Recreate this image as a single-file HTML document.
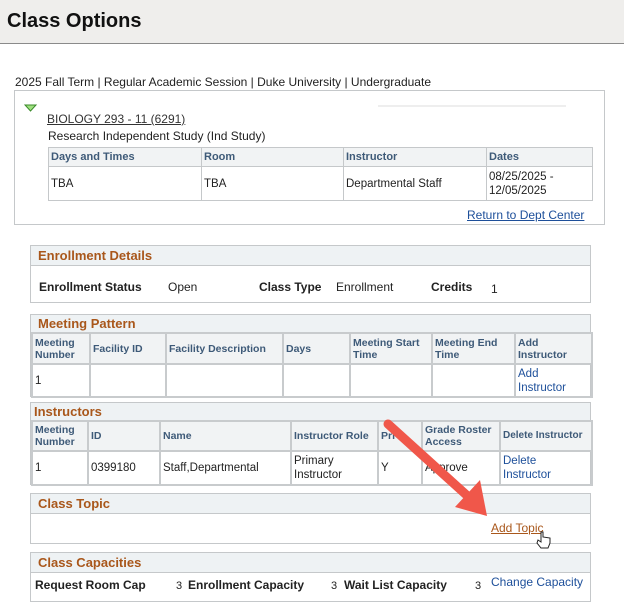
<!DOCTYPE html>
<html><head><style>
*{margin:0;padding:0;box-sizing:border-box}
body{width:624px;height:592px;overflow:hidden;background:#fff;font-family:"Liberation Sans",Arial,sans-serif;font-size:12px;color:#222;position:relative}
.a{position:absolute}
.hdr{left:0;top:0;width:624px;height:44px;background:#efeeec;border-bottom:1px solid #8a8a8a}
.hdr div{position:absolute;left:7px;top:10px;font-size:20px;font-weight:bold;color:#111}
.lnk{color:#1d4f9a;text-decoration:underline}
table{border-collapse:collapse;position:absolute;table-layout:fixed}
td,th{border:1px solid #c5c8ca;text-align:left;vertical-align:middle;padding:0 2px;font-size:11.5px;overflow:hidden}
th{color:#3e5a78;font-weight:bold;font-size:10.5px;line-height:12px;background:#f1f3f4}
.grp{position:absolute;border:1px solid #c5c8ca;left:30px;width:561px}
.gh{height:20px;background:#eef2f4;border-bottom:1px solid #c5c8ca;color:#a9571b;font-weight:bold;font-size:13px;padding:2px 7px}
.tb th,.tb td{border:2px solid #c8cbcd}
</style></head><body>
<div class="a hdr"><div>Class Options</div></div>
<div class="a" style="left:15px;top:75px">2025 Fall Term | Regular Academic Session | Duke University | Undergraduate</div>
<div class="a" style="left:14px;top:90px;width:591px;height:135px;border:1px solid #c5c8ca"></div>
<svg class="a" style="left:24px;top:104px" width="14" height="9"><polygon points="1,1 12,1 6.5,7" fill="#9fe07f" stroke="#3a8a2a" stroke-width="1"/></svg>
<div class="a" style="left:378px;top:105px;width:188px;height:2px;background:#eee"></div>
<div class="a lnk" style="left:47px;top:112px;color:#333">BIOLOGY 293 - 11 (6291)</div>
<div class="a" style="left:48px;top:129px">Research Independent Study (Ind Study)</div>
<table style="left:48px;top:147px;width:544px">
<colgroup><col style="width:153px"><col style="width:142px"><col style="width:143px"><col style="width:106px"></colgroup>
<tr style="height:19px"><th style="font-size:11px">Days and Times</th><th style="font-size:11px">Room</th><th style="font-size:11px">Instructor</th><th style="font-size:11px">Dates</th></tr>
<tr style="height:34px"><td>TBA</td><td>TBA</td><td>Departmental Staff</td><td style="line-height:14px">08/25/2025 -<br>12/05/2025</td></tr>
</table>
<div class="a lnk" style="left:467px;top:208px">Return to Dept Center</div>

<div class="grp" style="top:245px;height:58px"><div class="gh">Enrollment Details</div>
<div class="a" style="left:8px;top:34px;font-weight:bold">Enrollment Status</div>
<div class="a" style="left:137px;top:34px">Open</div>
<div class="a" style="left:228px;top:34px;font-weight:bold">Class Type</div>
<div class="a" style="left:305px;top:34px">Enrollment</div>
<div class="a" style="left:400px;top:34px;font-weight:bold">Credits</div>
<div class="a" style="left:460px;top:36px">1</div></div>

<div class="grp" style="top:314px;height:83px"><div class="gh" style="height:18px;padding-top:1px">Meeting Pattern</div></div>
<table class="tb" style="left:31px;top:332px;width:560px">
<colgroup><col style="width:58px"><col style="width:76px"><col style="width:117px"><col style="width:67px"><col style="width:82px"><col style="width:83px"><col style="width:77px"></colgroup>
<tr style="height:31px"><th>Meeting Number</th><th>Facility ID</th><th>Facility Description</th><th>Days</th><th>Meeting Start Time</th><th>Meeting End Time</th><th>Add<br>Instructor</th></tr>
<tr style="height:33px"><td>1</td><td></td><td></td><td></td><td></td><td></td><td class="lnk" style="text-decoration:none;line-height:14px">Add<br>Instructor</td></tr>
</table>

<div class="grp" style="top:402px;height:83px"><div class="gh" style="height:18px;padding:1px 3px">Instructors</div></div>
<table class="tb" style="left:31px;top:420px;width:560px">
<colgroup><col style="width:56px"><col style="width:72px"><col style="width:131px"><col style="width:87px"><col style="width:44px"><col style="width:78px"><col style="width:92px"></colgroup>
<tr style="height:30px"><th>Meeting Number</th><th>ID</th><th>Name</th><th style="white-space:nowrap">Instructor Role</th><th>Pri</th><th>Grade Roster Access</th><th style="white-space:nowrap;font-size:10px">Delete Instructor</th></tr>
<tr style="height:34px"><td>1</td><td>0399180</td><td>Staff,Departmental</td><td style="line-height:14px">Primary<br>Instructor</td><td>Y</td><td>Approve</td><td class="lnk" style="text-decoration:none;line-height:14px">Delete<br>Instructor</td></tr>
</table>

<div class="grp" style="top:493px;height:51px"><div class="gh">Class Topic</div>
<div class="a" style="left:460px;top:27px;color:#a9571b;text-decoration:underline">Add Topic</div></div>

<div class="grp" style="top:552px;height:50px"><div class="gh">Class Capacities</div>
<div class="a" style="left:4px;top:25px;font-weight:bold">Request Room Cap</div>
<div class="a" style="left:145px;top:27px;font-size:11px">3</div>
<div class="a" style="left:157px;top:25px;font-weight:bold">Enrollment Capacity</div>
<div class="a" style="left:300px;top:27px;font-size:11px">3</div>
<div class="a" style="left:313px;top:25px;font-weight:bold">Wait List Capacity</div>
<div class="a" style="left:444px;top:27px;font-size:11px">3</div>
<div class="a lnk" style="left:460px;top:22px;text-decoration:none">Change Capacity</div></div>

<svg class="a" style="left:0;top:0" width="624" height="592">
<line x1="388" y1="424" x2="472" y2="500" stroke="#f0574a" stroke-width="9" stroke-linecap="round"/>
<polygon points="487,516 455,507 480,480" fill="#f0574a"/>
<path d="M541 532 l0 10 l-3 -2 l-1 3 l4 5 l7 0 l2 -5 l0 -5 l-7 -1 l0 -5 z" fill="#fff" stroke="#222" stroke-width="1"/>
</svg>
</body></html>
